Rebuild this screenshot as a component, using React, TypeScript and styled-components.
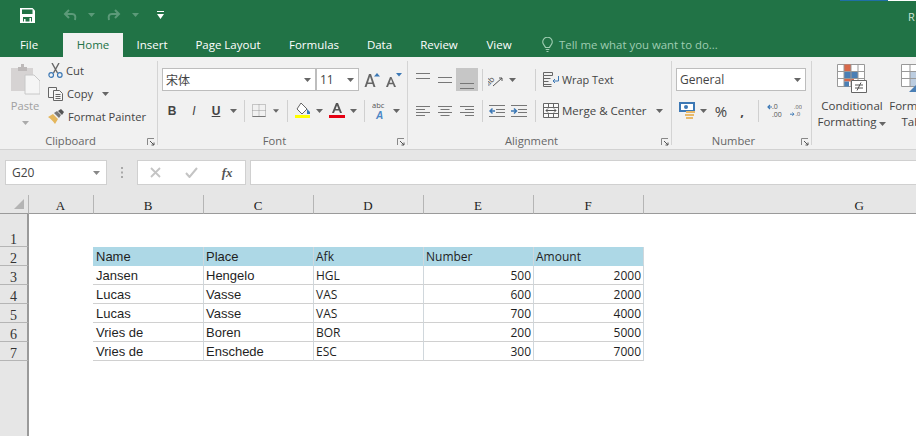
import React from 'react';
import styled, { createGlobalStyle } from 'styled-components';

const UI_FONT = '"Open Sans", "Noto Sans", sans-serif';

const GlobalStyle = createGlobalStyle`
  html, body { margin: 0; padding: 0; background: #fff; }
  body { font-family: ${UI_FONT}; overflow: hidden; }
  * { box-sizing: border-box; }
`;

const Page = styled.div`
  width: 916px;
  height: 436px;
  overflow: hidden;
  display: flex;
  flex-direction: column;
`;

const TitleBar = styled.div`
  position: relative;
  height: 33px;
  background: #217346;
  display: flex;
  align-items: center;
  padding: 0 0 3px 20px;
  color: #fff;
`;

const QuickIcon = styled.span<{ $w: number }>`
  width: ${({ $w }) => $w}px;
  display: flex;
  align-items: center;
`;

const ProgressStrip = styled.div`
  position: absolute;
  top: 0;
  right: 0;
  width: 76px;
  height: 1px;
  background: linear-gradient(90deg, #1f6fa5 63%, #fff 63%);
`;

const UserName = styled.span`
  position: absolute;
  right: 0;
  top: 9px;
  width: 8px;
  overflow: hidden;
  font-size: 11px;
  color: #cfe3d7;
`;

const TabRow = styled.div`
  height: 24px;
  background: #217346;
  display: flex;
  align-items: stretch;
  font-size: 11.5px;
  color: #fff;
`;

const Tab = styled.div<{ $active?: boolean; $w: number; $after?: number }>`
  width: ${({ $w }) => $w}px;
  margin-right: ${({ $after }) => $after || 0}px;
  display: flex;
  align-items: center;
  justify-content: center;
  padding-bottom: 1px;
  background: ${({ $active }) => ($active ? '#f1f1f1' : 'transparent')};
  color: ${({ $active }) => ($active ? '#217346' : '#fff')};
`;

const TellMe = styled.div`
  display: flex;
  align-items: center;
  gap: 6px;
  margin-left: 16px;
  color: #9fcdb2;
  font-size: 11.4px;
  padding-bottom: 1px;
`;

const Ribbon = styled.div`
  height: 93px;
  background: #f1f1f1;
  border-bottom: 1px solid #d2d2d2;
  display: flex;
  overflow: hidden;
`;

const Group = styled.div<{ $w: number; $last?: boolean }>`
  position: relative;
  flex: none;
  width: ${({ $w }) => $w}px;
  display: flex;
  flex-direction: column;
  &::after {
    content: '';
    display: ${({ $last }) => ($last ? 'none' : 'block')};
    position: absolute;
    right: 0;
    top: 4px;
    bottom: 4px;
    width: 1px;
    background: #d4d4d4;
  }
`;

const GroupBody = styled.div`
  height: 76px;
  display: flex;
`;

const GroupLabel = styled.div`
  height: 16px;
  padding-right: 17px;
  font-size: 11.2px;
  line-height: 16px;
  text-align: center;
  color: #666;
`;

const Launcher = styled.span`
  position: absolute;
  right: 3px;
  bottom: 3px;
  display: flex;
`;

const PasteColumn = styled.div`
  width: 48px;
  display: flex;
  flex-direction: column;
  align-items: center;
  padding: 7px 0 0 2px;
  color: #a0a0a0;
  font-size: 11.2px;
  line-height: 14px;
`;

const PasteLabel = styled.span`
  margin: 4px 0 8px;
`;

const ClipList = styled.div`
  display: flex;
  flex-direction: column;
  padding-top: 2px;
`;

const ClipRow = styled.div`
  height: 23px;
  display: flex;
  align-items: center;
  gap: 3px;
  font-size: 11.2px;
  color: #444;
  white-space: nowrap;
`;

const Rows = styled.div<{ $left: number }>`
  display: flex;
  flex-direction: column;
  padding: 11px 0 0 ${({ $left }) => $left}px;
  gap: 8px;
`;

const Row = styled.div`
  height: 23px;
  display: flex;
  align-items: center;
`;

const Select = styled.div<{ $w: number; $font?: string }>`
  width: ${({ $w }) => $w}px;
  height: 23px;
  background: #fff;
  border: 1px solid #bdbdbd;
  display: flex;
  align-items: center;
  justify-content: space-between;
  padding: 0 4px 0 3px;
  font-size: 12px;
  color: #444;
  font-family: ${({ $font }) => $font || UI_FONT};
`;

const Cell = styled.div<{ $w: number; $on?: boolean }>`
  flex: none;
  width: ${({ $w }) => $w}px;
  height: 23px;
  display: flex;
  align-items: center;
  justify-content: center;
  background: ${({ $on }) => ($on ? '#c6c6c6' : 'transparent')};
  color: #444;
`;

const Bold = styled.span<{ $kind: 'b' | 'i' | 'u' }>`
  font-family: "Liberation Sans", sans-serif;
  font-size: 12px;
  color: #444;
  font-weight: ${({ $kind }) => ($kind === 'i' ? 400 : 700)};
  font-style: ${({ $kind }) => ($kind === 'i' ? 'italic' : 'normal')};
  text-decoration: ${({ $kind }) => ($kind === 'u' ? 'underline' : 'none')};
`;

const Percent = styled.span`
  font-size: 15px;
`;

const Comma = styled.span`
  font-weight: 700;
  font-size: 13px;
`;

const VSep = styled.div`
  flex: none;
  width: 1px;
  height: 22px;
  background: #d0d0d0;
`;

const WideLabel = styled.div<{ $size?: number }>`
  display: flex;
  align-items: center;
  gap: 3px;
  font-size: ${({ $size }) => $size || 11.5}px;
  color: #444;
  white-space: nowrap;
`;

const StyleButton = styled.div<{ $w: number; $left?: number }>`
  flex: none;
  width: ${({ $w }) => $w}px;
  margin-left: ${({ $left }) => $left || 0}px;
  display: flex;
  flex-direction: column;
  align-items: center;
  padding-top: 7px;
  font-size: 11.5px;
  line-height: 16px;
  color: #444;
  white-space: nowrap;
`;

const StyleText = styled.div`
  margin-top: 5px;
  text-align: center;
`;

const FormulaArea = styled.div`
  height: 45px;
  background: #e6e6e6;
  padding: 10px 0 0 5px;
  display: flex;
  align-items: flex-start;
`;

const NameBox = styled.div`
  width: 102px;
  height: 25px;
  background: #fff;
  border: 1px solid #d0d0d0;
  display: flex;
  align-items: center;
  justify-content: space-between;
  padding: 0 6px;
  font-size: 12px;
  color: #444;
`;

const Dots = styled.div`
  width: 30px;
  height: 25px;
  display: flex;
  align-items: center;
  justify-content: center;
`;

const FxBox = styled.div`
  width: 109px;
  height: 25px;
  background: #fff;
  border: 1px solid #d0d0d0;
  display: flex;
  align-items: center;
`;

const FxCell = styled.span`
  flex: 1;
  display: flex;
  justify-content: center;
  align-items: center;
`;

const FxText = styled.span`
  font-family: "Liberation Serif", serif;
  font-style: italic;
  font-weight: 700;
  font-size: 13px;
  color: #555;
`;

const FormulaInput = styled.div`
  flex: 1;
  height: 25px;
  margin-left: 4px;
  background: #fff;
  border: 1px solid #d0d0d0;
  border-right: 0;
`;

const Sheet = styled.div`
  flex: 1;
  display: grid;
  grid-template-columns: 29px 65px 110px 110px 110px 110px 110px 272px;
  grid-template-rows: 19px 33px repeat(6, 19px) 1fr;
  background: #fff;
`;

const Corner = styled.div`
  background: #e6e6e6;
  border-right: 1px solid #b5b5b5;
  border-bottom: 1px solid #9a9a9a;
  position: relative;
  &::after {
    content: '';
    position: absolute;
    right: 4px;
    bottom: 4px;
    border-style: solid;
    border-width: 0 0 10px 10px;
    border-color: transparent transparent #b4b4b4 transparent;
  }
`;

const ColHead = styled.div<{ $open?: boolean }>`
  background: #e6e6e6;
  border-right: ${({ $open }) => ($open ? '0' : '1px solid #b5b5b5')};
  border-bottom: 1px solid #9a9a9a;
  display: flex;
  align-items: center;
  justify-content: ${({ $open }) => ($open ? 'flex-end' : 'center')};
  padding: 4px ${({ $open }) => ($open ? '52px' : '1px')} 0 0;
  font-family: "Liberation Serif", serif;
  font-size: 13px;
  color: #222;
`;

const RowHead = styled.div`
  background: #e6e6e6;
  border-right: 2px solid #9a9a9a;
  border-bottom: 1px solid #b5b5b5;
  display: flex;
  align-items: flex-end;
  justify-content: center;
  font-family: "Liberation Serif", serif;
  font-size: 14px;
  line-height: 13px;
  color: #333;
`;

const RowFill = styled.div`
  background: #e6e6e6;
  border-right: 2px solid #9a9a9a;
`;

const DataCell = styled.div<{
  $head?: boolean;
  $right?: boolean;
  $alt?: boolean;
  $first?: boolean;
}>`
  background: ${({ $head }) => ($head ? '#add8e6' : '#fff')};
  border-right: 1px solid #d0d7dc;
  border-bottom: 1px solid ${({ $head }) => ($head ? '#add8e6' : '#d0d0d0')};
  margin-left: ${({ $first }) => ($first ? '-1px' : '0')};
  display: flex;
  align-items: center;
  justify-content: ${({ $right }) => ($right ? 'flex-end' : 'flex-start')};
  padding: 0 2px 0 ${({ $first }) => ($first ? '3px' : '2px')};
  font-family: ${({ $alt }) =>
    $alt ? UI_FONT : '"Liberation Sans", Arial, sans-serif'};
  font-size: ${({ $alt }) => ($alt ? '12px' : '13px')};
  color: #1f1f1f;
`;

const Blank = styled.div<{ $span?: number }>`
  grid-column: span ${({ $span }) => $span || 1};
`;

const Caret = ({ color = '#666' }: { color?: string }): JSX.Element => (
  <svg width="7" height="4" viewBox="0 0 7 4"><path d="M0 0h7L3.500 4z" fill={color} /></svg>
);

const LauncherIcon = (): JSX.Element => (
  <svg width="8" height="8" viewBox="0 0 8 8" fill="none" stroke="#888">
    <path d="M.5 7V.5H7" />
    <path d="M3 3l4 4M7 4.500V7H4.500" stroke="#555" />
  </svg>
);

const SaveIcon = (): JSX.Element => (
  <svg width="15" height="15" viewBox="0 0 15 15">
    <path d="M0 0h12.500L15 2.500V15H0z" fill="#fff" />
    <path d="M2 1.500h10.500V6H2zM3 9h9v4.500H3z" fill="#217346" />
    <path d="M4 11h1.500v4H4zM9.500 10h1.500v5H9.500z" fill="#fff" />
  </svg>
);

const UndoIcon = ({ flip }: { flip?: boolean }): JSX.Element => (
  <svg width="14" height="12" viewBox="0 0 14 12" fill="none" stroke="#5c9a79" strokeWidth="2">
    <g transform={flip ? 'translate(14 0) scale(-1 1)' : undefined}>
      <path d="M6 1L2 5l4 4M2 5h7c3 0 4 2 3 6" />
    </g>
  </svg>
);

const Bulb = (): JSX.Element => (
  <svg width="11" height="16" viewBox="0 0 11 16" fill="none" stroke="#9fcdb2" strokeWidth="1.100">
    <path d="M3.500 10.500C3 8.500.7 7.500.7 5a4.800 4.800 0 0 1 9.600 0c0 2.500-2.300 3.500-2.800 5.500zM3.700 12.500h3.600M4.500 14.500h2" />
  </svg>
);

const PasteIcon = (): JSX.Element => (
  <svg width="29" height="31" viewBox="0 0 29 31">
    <path d="M0 4h22v23H0z" fill="#d6d3d3" />
    <path d="M7 3h3V0h3v3h3v4H7z" fill="#bdb9b9" />
    <path d="M14 11h9l6 6v13H14z" fill="#f5f5f5" stroke="#c8c8c8" />
  </svg>
);

const ScissorsIcon = (): JSX.Element => (
  <svg width="15" height="15" viewBox="0 0 15 15" fill="none">
    <path d="M4 0l5.500 10M11 0L5.500 10" stroke="#666" strokeWidth="1.400" />
    <circle cx="3.200" cy="12" r="2.300" stroke="#3c78b5" strokeWidth="1.200" />
    <circle cx="11.800" cy="12" r="2.300" stroke="#3c78b5" strokeWidth="1.200" />
  </svg>
);

const CopyIcon = (): JSX.Element => (
  <svg width="16" height="14" viewBox="0 0 16 14" fill="#f6f6f6" stroke="#666">
    <path d="M.5.500h8v10h-8z" />
    <path d="M5.500 3.500h6l3 3v7h-9z" />
    <path d="M7.500 7.500h5M7.500 9.500h5M7.500 11.500h5" />
  </svg>
);

const BrushIcon = (): JSX.Element => (
  <svg width="17" height="15" viewBox="0 0 17 15">
    <path d="M0 8l5-3 5 5-3 5C5 12 3 10 0 8z" fill="#e4b65c" />
    <path d="M6 4l3-2 4 4-2 3z" fill="#777" />
    <path d="M10 2l3-2 3 3-2 3z" fill="#555" />
  </svg>
);

const BorderIcon = (): JSX.Element => (
  <svg width="14" height="13" viewBox="0 0 14 13" fill="none" stroke="#999" strokeDasharray="1 1">
    <path d="M.5.500h13v12H.5zM7 .5v12M.5 6.500h13" />
    <path d="M.5 12.500h13" stroke="#777" strokeDasharray="none" />
  </svg>
);

const FillIcon = (): JSX.Element => (
  <svg width="16" height="16" viewBox="0 0 16 16">
    <path d="M6 0l6 6-5 5-5-5z" fill="#fff" stroke="#666" />
    <path d="M12 6l3 3v2h-3z" fill="#3c78b5" />
    <path d="M0 12h15v3H0z" fill="#ffff00" />
  </svg>
);

const FontColorIcon = (): JSX.Element => (
  <svg width="16" height="16" viewBox="0 0 16 16">
    <path d="M7 0h2l4 10h-2L10 7.500H6L5 10H3zM6.600 6h2.800L8 2.500z" fill="#555" />
    <path d="M0 12h16v3H0z" fill="#e60012" />
  </svg>
);

const GrowFont = ({ shrink }: { shrink?: boolean }): JSX.Element => (
  <svg width="16" height="14" viewBox="0 0 16 14">
    <path
      d={shrink
        ? 'M4 4h1.500L10 14H8l-1-2.800H3L2 14H0zM3.600 9.800h2.800L5 6z'
        : 'M5 1h2l4.500 13h-2l-1-3H3.500l-1 3H.5zM4 9.500h4L6 3.500z'}
      fill="#666"
    />
    <path d={shrink ? 'M10 0h6l-3 3.500z' : 'M10 3.500L13 0l3 3.500z'} fill="#3c78b5" />
  </svg>
);

const AbcIcon = (): JSX.Element => (
  <svg width="16" height="18" viewBox="0 0 16 18">
    <text x="0" y="6" fontSize="7.500" fontFamily="Open Sans" fill="#555">abc</text>
    <text x="4" y="17" fontSize="10" fontWeight="700" fontStyle="italic" fontFamily="Liberation Sans" fill="#4a86c5">A</text>
  </svg>
);

// two lines sitting at the top, middle or bottom of the button
const VAlignLines = ({ top }: { top: number }): JSX.Element => (
  <svg width="14" height="22" viewBox="0 0 14 22" stroke="#777">
    <path d={`M0 ${top + 0.5}h14M0 ${top + 5.5}h14`} />
  </svg>
);

const HAlignLines = ({ kind }: { kind: 'c' | 'l' | 'r' }): JSX.Element => {
  const x = { l: 0, c: 2.5, r: 5 }[kind];
  return (
    <svg width="14" height="12" viewBox="0 0 14 12" stroke="#777">
      <path d={`M0 1.500h14M${x} 4.500h9M0 7.500h14M${x} 10.500h9`} />
    </svg>
  );
};

const OrientIcon = (): JSX.Element => (
  <svg width="16" height="15" viewBox="0 0 16 15" fill="none" stroke="#555">
    <text x="-3" y="10" fontSize="8" fontFamily="Open Sans" fill="#555" stroke="none" transform="rotate(-45 4 8)">ab</text>
    <path d="M5 14l9-8M14 6v3M14 6h-3" />
  </svg>
);

const IndentIcon = ({ right }: { right?: boolean }): JSX.Element => (
  <svg width="16" height="12" viewBox="0 0 16 12" fill="none" stroke="#777">
    <path d="M0 .5h16M7 4.500h9M7 7.500h9M0 11.500h16" />
    <path d={right ? 'M0 6h5M3 3.500L5.500 6 3 8.500' : 'M6 6H1M3.500 3.500L1 6l2.500 2.500'} stroke="#3c78b5" strokeWidth="1.500" />
  </svg>
);

const WrapIcon = (): JSX.Element => (
  <svg width="16" height="15" viewBox="0 0 16 15" fill="none" stroke="#666">
    <path d="M.5.5h9v3h-9zM.5 3.500v11h8M.5 6.500h7M.5 9.500h5M.5 12.500h8" />
    <path d="M15.500 4v5H10M12 7l-2 2 2 2" stroke="#3c78b5" />
  </svg>
);

const MergeIcon = (): JSX.Element => (
  <svg width="16" height="15" viewBox="0 0 16 15" fill="#fafafa" stroke="#666">
    <path d="M.5.500h15v14H.5zM.5 4.500h15M.5 10.500h15M5.500.5v4M10.500.5v4M5.500 10.500v4M10.500 10.500v4" />
    <path d="M3 7.500h10M5 5.500l-2 2 2 2M11 5.500l2 2-2 2" fill="none" stroke="#555" />
  </svg>
);

const MoneyIcon = (): JSX.Element => (
  <svg width="17" height="17" viewBox="0 0 17 17">
    <path d="M0 0h16v10H0z" fill="#3c78b5" />
    <path d="M2 2h12v6H2z" fill="#fff" />
    <circle cx="7" cy="5" r="2" fill="#3c78b5" />
    <path d="M7 9h9v2H7zM6 12h9v2H6zM7 15h7v2H7z" fill="#e8b96a" />
  </svg>
);

const DecimalIcon = ({ grow }: { grow?: boolean }): JSX.Element => (
  <svg width="15" height="16" viewBox="0 0 15 16">
    <text x="5" y="6" fontSize="7" fontFamily="Open Sans" fill="#555">{grow ? '.00' : '.0'}</text>
    <text x={grow ? 7 : 5} y="14" fontSize="7" fontFamily="Open Sans" fill="#555">{grow ? '.0' : '.00'}</text>
    <path d={grow ? 'M0 12h5M3 10l2 2-2 2' : 'M5 4H1M3 2L1 4l2 2'} fill="none" stroke="#3c78b5" strokeWidth="1.200" />
  </svg>
);

const ConditionalIcon = (): JSX.Element => (
  <svg width="30" height="29" viewBox="0 0 30 29">
    <path d="M.5.500h27v22H.5z" fill="#fff" stroke="#999" />
    <path d="M7 .5h7v7H7z" fill="#d8694a" />
    <path d="M7 7.500h14v7H7z" fill="#4a7fb5" />
    <path d="M7 14.500h10v3H7z" fill="#d8694a" />
    <path d="M7 17.500h5v5H7z" fill="#4a7fb5" />
    <path d="M7 .5v22M14 .5v22M21 .5v22M.5 7.500h27M.5 14.500h27" fill="none" stroke="#999" />
    <path d="M14.500 16.500h15v12h-15z" fill="#fff" stroke="#666" />
    <path d="M18 21h8M18 24h8M24 18.500l-4 8" stroke="#555" fill="none" />
  </svg>
);

const TableIcon = (): JSX.Element => (
  <svg width="30" height="29" viewBox="0 0 30 29">
    <path d="M.5.500h27v22H.5z" fill="#fff" stroke="#999" />
    <path d="M9 7h18v15H9z" fill="#bccde0" />
    <path d="M9 .5v22M18 .5v22M.5 7.500h27M.5 14.500h27" fill="none" stroke="#999" />
    <path d="M8 28l12-12 6 12z" fill="#4a7fb5" />
  </svg>
);

const FxCross = (): JSX.Element => (
  <svg width="11" height="11" viewBox="0 0 11 11" stroke="#c4c4c4" strokeWidth="1.800"><path d="M1 1l9 9M10 1l-9 9" /></svg>
);

const FxCheck = (): JSX.Element => (
  <svg width="13" height="11" viewBox="0 0 13 11" fill="none" stroke="#c4c4c4" strokeWidth="2"><path d="M1 6l3.500 4L12 1" /></svg>
);

const GripDots = (): JSX.Element => (
  <svg width="3" height="11" viewBox="0 0 3 11" fill="#a8a8a8">
    <path d="M0 0h2v2H0zM0 4.500h2v2H0zM0 9h2v2H0z" />
  </svg>
);

const tabs: Array<{ label: string; w: number; after?: number; active?: boolean }> = [
  { label: 'File', w: 58, after: 5 },
  { label: 'Home', w: 60, active: true },
  { label: 'Insert', w: 58 },
  { label: 'Page Layout', w: 94 },
  { label: 'Formulas', w: 78 },
  { label: 'Data', w: 53 },
  { label: 'Review', w: 66 },
  { label: 'View', w: 54 },
];

const columns = ['A', 'B', 'C', 'D', 'E', 'F'];

const tableHead = ['Name', 'Place', 'Afk', 'Number', 'Amount'];
const tableRows: Array<[string, string, string, number, number]> = [
  ['Jansen', 'Hengelo', 'HGL', 500, 2000],
  ['Lucas', 'Vasse', 'VAS', 600, 2000],
  ['Lucas', 'Vasse', 'VAS', 700, 4000],
  ['Vries de', 'Boren', 'BOR', 200, 5000],
  ['Vries de', 'Enschede', 'ESC', 300, 7000],
];

const App = (): JSX.Element => (
  <Page>
    <GlobalStyle />
    <TitleBar>
      <QuickIcon $w={43}><SaveIcon /></QuickIcon>
      <QuickIcon $w={25}><UndoIcon /></QuickIcon>
      <QuickIcon $w={19}><Caret color="#5c9a79" /></QuickIcon>
      <QuickIcon $w={25}><UndoIcon flip /></QuickIcon>
      <QuickIcon $w={25}><Caret color="#5c9a79" /></QuickIcon>
      <QuickIcon $w={10}>
        <svg width="7" height="8" viewBox="0 0 7 8" fill="#fff"><path d="M0 0h7v1H0zM0 3h7L3.500 8z" /></svg>
      </QuickIcon>
      <ProgressStrip />
      <UserName>R</UserName>
    </TitleBar>

    <TabRow>
      {tabs.map((tab) => (
        <Tab key={tab.label} $w={tab.w} $after={tab.after} $active={tab.active}>{tab.label}</Tab>
      ))}
      <TellMe><Bulb />Tell me what you want to do...</TellMe>
    </TabRow>

    <Ribbon>
      <Group $w={158}>
        <GroupBody>
          <PasteColumn>
            <PasteIcon />
            <PasteLabel>Paste</PasteLabel>
            <Caret color="#aaa" />
          </PasteColumn>
          <ClipList>
            <ClipRow><ScissorsIcon />Cut</ClipRow>
            <ClipRow><CopyIcon />Copy&nbsp;&nbsp;<Caret /></ClipRow>
            <ClipRow><BrushIcon />Format Painter</ClipRow>
          </ClipList>
        </GroupBody>
        <GroupLabel>Clipboard</GroupLabel>
        <Launcher><LauncherIcon /></Launcher>
      </Group>

      <Group $w={250}>
        <GroupBody>
          <Rows $left={4}>
            <Row>
              <Select $w={154} $font={'"Noto Sans CJK SC", sans-serif'}>宋体<Caret /></Select>
              <Select $w={43}>11<Caret /></Select>
              <Cell $w={26}><GrowFont /></Cell>
              <Cell $w={18}><GrowFont shrink /></Cell>
            </Row>
            <Row>
              <Cell $w={20}><Bold $kind="b">B</Bold></Cell>
              <Cell $w={24}><Bold $kind="i">I</Bold></Cell>
              <Cell $w={20}><Bold $kind="u">U</Bold></Cell>
              <Cell $w={14}><Caret /></Cell>
              <Cell $w={4} />
              <VSep />
              <Cell $w={28}><BorderIcon /></Cell>
              <Cell $w={6}><Caret /></Cell>
              <Cell $w={8} />
              <VSep />
              <Cell $w={7} />
              <Cell $w={16}><FillIcon /></Cell>
              <Cell $w={16}><Caret /></Cell>
              <Cell $w={20}><FontColorIcon /></Cell>
              <Cell $w={12}><Caret /></Cell>
              <Cell $w={5} />
              <VSep />
              <Cell $w={7} />
              <Cell $w={16}><AbcIcon /></Cell>
              <Cell $w={17}><Caret /></Cell>
            </Row>
          </Rows>
        </GroupBody>
        <GroupLabel>Font</GroupLabel>
        <Launcher><LauncherIcon /></Launcher>
      </Group>

      <Group $w={264}>
        <GroupBody>
          <Rows $left={4}>
            <Row>
              <Cell $w={22}><VAlignLines top={4} /></Cell>
              <Cell $w={22}><VAlignLines top={8} /></Cell>
              <Cell $w={22} $on><VAlignLines top={14} /></Cell>
              <Cell $w={4} />
              <VSep />
              <Cell $w={26}><OrientIcon /></Cell>
              <Cell $w={7}><Caret /></Cell>
              <Cell $w={19} />
              <VSep />
              <Cell $w={7} />
              <WideLabel $size={10.9}><WrapIcon />Wrap Text</WideLabel>
            </Row>
            <Row>
              <Cell $w={22}><HAlignLines kind="l" /></Cell>
              <Cell $w={22}><HAlignLines kind="c" /></Cell>
              <Cell $w={22}><HAlignLines kind="r" /></Cell>
              <Cell $w={4} />
              <VSep />
              <Cell $w={28}><IndentIcon /></Cell>
              <Cell $w={16}><IndentIcon right /></Cell>
              <Cell $w={8} />
              <VSep />
              <Cell $w={7} />
              <WideLabel><MergeIcon />Merge &amp; Center&nbsp;&nbsp;<Caret /></WideLabel>
            </Row>
          </Rows>
        </GroupBody>
        <GroupLabel>Alignment</GroupLabel>
        <Launcher><LauncherIcon /></Launcher>
      </Group>

      <Group $w={140}>
        <GroupBody>
          <Rows $left={4}>
            <Row><Select $w={130}>General<Caret /></Select></Row>
            <Row>
              <Cell $w={22}><MoneyIcon /></Cell>
              <Cell $w={10}><Caret /></Cell>
              <Cell $w={26}><Percent>%</Percent></Cell>
              <Cell $w={16}><Comma>,</Comma></Cell>
              <Cell $w={8} />
              <VSep />
              <Cell $w={31}><DecimalIcon /></Cell>
              <Cell $w={12}><DecimalIcon grow /></Cell>
            </Row>
          </Rows>
        </GroupBody>
        <GroupLabel>Number</GroupLabel>
        <Launcher><LauncherIcon /></Launcher>
      </Group>

      <Group $w={104} $last>
        <GroupBody>
          <StyleButton $w={74} $left={3}>
            <ConditionalIcon />
            <StyleText>Conditional<br />Formatting <Caret /></StyleText>
          </StyleButton>
          <StyleButton $w={54}>
            <TableIcon />
            <StyleText>Format as<br />Table</StyleText>
          </StyleButton>
        </GroupBody>
      </Group>
    </Ribbon>

    <FormulaArea>
      <NameBox>G20<Caret color="#888" /></NameBox>
      <Dots><GripDots /></Dots>
      <FxBox>
        <FxCell><FxCross /></FxCell>
        <FxCell><FxCheck /></FxCell>
        <FxCell><FxText>fx</FxText></FxCell>
      </FxBox>
      <FormulaInput />
    </FormulaArea>

    <Sheet>
      <Corner />
      {columns.map((col) => <ColHead key={col}>{col}</ColHead>)}
      <ColHead $open>G</ColHead>

      <RowHead>1</RowHead>
      <Blank $span={7} />

      <RowHead>2</RowHead>
      <Blank />
      {tableHead.map((label, i) => (
        <DataCell key={label} $head $alt={i > 1} $first={i === 0}>{label}</DataCell>
      ))}
      <Blank />

      {tableRows.map((row, r) => (
        <React.Fragment key={r}>
          <RowHead>{r + 3}</RowHead>
          <Blank />
          {row.map((value, i) => (
            <DataCell key={i} $alt={i > 1} $right={i > 2} $first={i === 0}>{value}</DataCell>
          ))}
          <Blank />
        </React.Fragment>
      ))}
      <RowFill />
    </Sheet>
  </Page>
);

export default App;
